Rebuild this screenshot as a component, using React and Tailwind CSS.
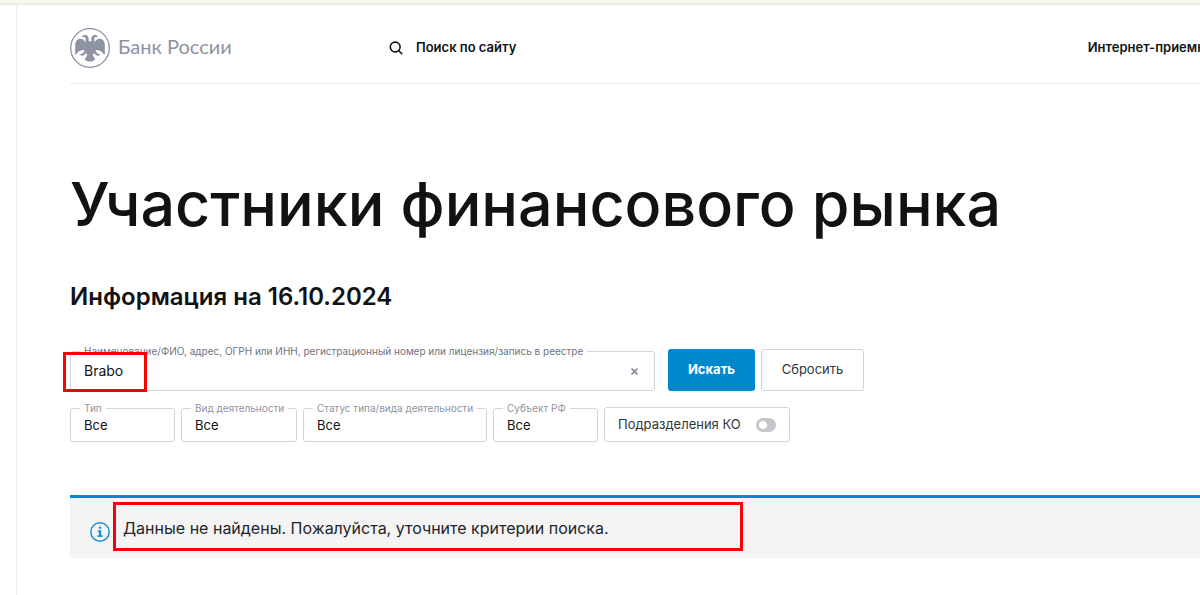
import React from 'react';

function EagleLogo() {
  return (
    <svg width="40" height="40" viewBox="0 0 40 40" fill="none" aria-hidden="true">
      <circle cx="20" cy="20" r="19.3" stroke="#8d93a3" strokeWidth="1.3" />
      <g fill="#8d93a3">
        {/* heads and neck */}
        <path d="M18.600 13.500c.2-1.800.3-3.400-.4-4.800-.7-1.300-2.200-1.900-3.700-1.700-1.200.2-2.200.8-2.800 1.700l2.700.2c1.200.5 1.500 1.500 1.200 2.800-.3 1.200-.3 2.300.2 3.300h8.400c.5-1 .5-2.100.2-3.300-.3-1.300 0-2.300 1.200-2.800l2.700-.2c-.6-.9-1.600-1.500-2.800-1.700-1.500-.2-3 .4-3.700 1.700-.7 1.400-.6 3-.4 4.800z" />
        {/* wings */}
        <path d="M15.800 15.500c-.9-2.700-2.700-4.800-5.200-4.800-3.300 0-5.400 2.600-5.400 6.300v9.600c1.300-.3 2.100-1.200 2.600-2.400 1.600-1.500 3.600-2.200 5.600-2.300l2.900 1.800zM24.200 15.500c.9-2.700 2.700-4.800 5.200-4.800 3.300 0 5.400 2.600 5.400 6.300v9.600c-1.300-.3-2.100-1.200-2.600-2.400-1.600-1.500-3.600-2.200-5.600-2.300l-2.900 1.800z" />
        {/* body and tail */}
        <path d="M15.400 13.500h9.200v8.700c0 2-.8 3.400-2 4.800l2.700 4.300c-1.300 1.500-3.200 2.300-5.300 2.300s-4-.8-5.300-2.300l2.700-4.300c-1.200-1.400-2-2.800-2-4.800z" />
        {/* legs */}
        <path d="m14.600 22.600 1.600 1.700c-.4 1.300-1.200 2.200-2.400 2.700l-1.300 1.400.1-1.200-2.300.7 1-1.200-2.700.2c1.700-.6 3.300-1.100 4.500-2zM25.400 22.600l-1.600 1.700c.4 1.300 1.200 2.200 2.400 2.700l1.300 1.400-.1-1.200 2.300.7-1-1.200 2.700.2c-1.700-.6-3.300-1.100-4.500-2z" />
      </g>
    </svg>
  );
}

function Header() {
  return (
    <header className="flex h-[79px] items-center border-b border-[#ececee] pt-2">
      <a href="#" className="flex w-[319px] shrink-0 items-center gap-2 font-[Lato,'Open_Sans',sans-serif] text-xl leading-6 text-[#8d93a3]">
        <EagleLogo />
        <span className="pb-1">Банк России</span>
      </a>
      <button type="button" className="flex items-center gap-[13px] text-[13px] font-semibold">
        <svg width="14" height="14" viewBox="0 0 14 14" fill="none" stroke="#111214" strokeWidth="1.600" strokeLinecap="round" aria-hidden="true">
          <circle cx="6.200" cy="6" r="4.900" />
          <path d="m9.800 9.700 3 3" />
        </svg>
        Поиск по сайту
      </button>
      <a href="#" className="-mr-5 ml-auto whitespace-nowrap text-[13px] font-semibold">Интернет-приемная</a>
    </header>
  );
}

const FILTERS = [
  { id: 'type', label: 'Тип', width: 'w-[105px]' },
  { id: 'activity', label: 'Вид деятельности', width: 'w-[116px]' },
  { id: 'status', label: 'Статус типа/вида деятельности', width: 'w-[184px]' },
  { id: 'region', label: 'Субъект РФ', width: 'w-[105px]' },
];

function FilterSelect({ id, label, width }) {
  return (
    <fieldset className={`h-10 min-w-0 rounded-[3px] border border-[#d3d5da] pl-[9px] ${width}`}>
      <legend className="whitespace-nowrap px-1 text-[10px] leading-3 text-[#8d93a3]">
        <label htmlFor={id}>{label}</label>
      </legend>
      <select id={id} className="block w-full appearance-none bg-transparent pl-1 text-[13px] leading-[22px] outline-none">
        <option>Все</option>
      </select>
    </fieldset>
  );
}

function SearchForm() {
  return (
    <form className="mt-8 max-w-[794px]" onSubmit={e => e.preventDefault()}>
      <div className="flex items-end gap-[6px]">
        <div className="relative mr-[7px] min-w-0 flex-1">
          <fieldset className="h-[46px] min-w-0 rounded-[3px] border border-[#d3d5da] pl-[9px]">
            <legend className="whitespace-nowrap px-1 text-[10px] leading-3 text-[#6e7482]">
              <label htmlFor="name">Наименование/ФИО, адрес, ОГРН или ИНН, регистрационный номер или лицензия/запись в реестре</label>
            </legend>
            <div className="flex h-7 items-center pr-3">
              <input id="name" type="text" defaultValue="Brabo" className="min-w-0 flex-1 bg-transparent pl-1 text-sm outline-none" />
              <button type="button" aria-label="Очистить" className="p-1">
                <svg width="7" height="7" viewBox="0 0 7 7" stroke="#858b9a" strokeWidth="1.600" aria-hidden="true">
                  <path d="m.5.500 6 6m0-6-6 6" />
                </svg>
              </button>
            </div>
          </fieldset>
          <div className="pointer-events-none absolute -bottom-px -left-[7px] h-10 w-[84px] border-[3px] border-[#fb0007]" />
        </div>
        <button type="submit" className="h-[42px] w-[87px] rounded-[3px] bg-[#0088cc] text-[13px] font-bold text-white">Искать</button>
        <button type="reset" className="h-[42px] w-[103px] rounded-[3px] border border-[#d3d5da] text-[13px] text-[#333539]">Сбросить</button>
      </div>

      <div className="mt-[11px] flex items-end gap-[6px]">
        {FILTERS.map(f => (
          <FilterSelect key={f.id} {...f} />
        ))}
        <label className="flex h-[35px] w-[186px] items-center justify-between rounded-[3px] border border-[#d3d5da] px-[13px] text-[13px] text-[#333539]">
          Подразделения КО
          <input
            type="checkbox"
            className="h-3.5 w-5 appearance-none rounded-full bg-[#c4c6cc] before:m-[3px] before:block before:size-2 before:rounded-full before:bg-white checked:bg-[#0088cc] checked:before:ml-[9px]"
          />
        </label>
      </div>
    </form>
  );
}

function Notice() {
  return (
    <div className="relative mt-[53px] flex h-[63px] items-center border-t-[3px] border-[#0088cc] bg-[#f4f4f4] pl-5">
      <svg width="20" height="20" viewBox="0 0 20 20" fill="none" className="mt-2 shrink-0" aria-hidden="true">
        <circle cx="10" cy="10" r="9.200" stroke="#1b8fcf" strokeWidth="1.500" />
        <path d="M8.800 4.700h2.400v2H8.800zM7.800 8.200h3.400v5h1.300V15h-5v-1.800h1.400V9.900H7.800z" fill="#1b8fcf" />
      </svg>
      <p className="ml-[13px] text-base text-[#232529]">Данные не найдены. Пожалуйста, уточните критерии поиска.</p>
      <div className="pointer-events-none absolute left-[43px] top-1 h-[49px] w-[630px] border-[3px] border-[#fb0007]" />
    </div>
  );
}

export default function App() {
  return (
    <div className="min-h-screen overflow-hidden bg-white font-[Inter,'Open_Sans',sans-serif] text-[#111214]">
      <div className="h-[5px] border-b-2 border-[#eceee6] bg-[#f8faf2]" />
      <div className="ml-4 min-h-[calc(100vh-5px)] border-l border-[#ececee] pl-[53px]">
        <Header />
        <main>
          <h1 className="mt-20 whitespace-nowrap text-[61px] font-medium leading-20">Участники финансового рынка</h1>
          <h2 className="mt-[37px] text-2xl font-semibold leading-8">Информация на 16.10.2024</h2>
          <SearchForm />
          <Notice />
        </main>
      </div>
    </div>
  );
}
